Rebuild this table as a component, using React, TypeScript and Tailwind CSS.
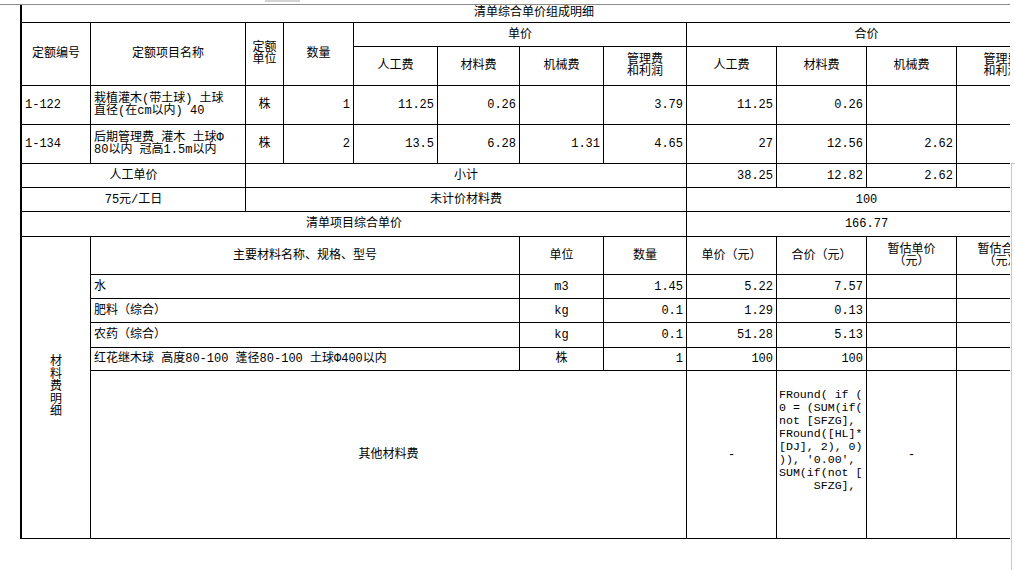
import React from "react";

type CellProps = { c?: string; children?: React.ReactNode };

const Cell = ({ c = "", children }: CellProps) => (
  <div className={`bg-white flex items-center overflow-hidden whitespace-nowrap ${c}`}>{children}</div>
);

const C = "justify-center text-center";
const R = "justify-end pr-[3px]";
const L = "justify-start pl-[3px]";

export default function App() {
  const vert = ["材", "料", "费", "明", "细"];
  return (
    <div className="w-[1015px] h-[570px] bg-white overflow-hidden text-black text-[12px] font-['Liberation_Mono','Noto_Sans_CJK_SC',monospace]">
      <div className="h-[4px] flex">
        <div className="ml-[265px] w-[35px] h-[2px] bg-[#d4d4d4]" />
      </div>
      <div className="w-[1010px] h-px bg-[#8c8c8c]" />
      <div className="flex">
        <div className="w-[20px] shrink-0" />
        <div className="w-[990px] shrink-0 overflow-hidden">
          <div className="grid w-[1026px] gap-px bg-black border-l-2 border-b border-black grid-cols-[68px_154px_37px_69px_83px_81px_83px_82px_89px_89px_89px_89px] grid-rows-[17px_23px_38px_38px_38px_23px_23px_24px_37px_23px_23px_24px_22px_167px] leading-[14px]">
            {/* row 1 */}
            <Cell c={`col-span-12 ${C} items-start pt-[1px]`}>清单综合单价组成明细</Cell>
            {/* rows 2-3 */}
            <Cell c={`row-span-2 ${C}`}>定额编号</Cell>
            <Cell c={`row-span-2 ${C}`}>定额项目名称</Cell>
            <Cell c={`row-span-2 ${C} leading-[12px]`}>定额<br />单位</Cell>
            <Cell c={`row-span-2 ${C}`}>数量</Cell>
            <Cell c={`col-span-4 ${C}`}>单价</Cell>
            <Cell c={`col-span-4 ${C}`}>合价</Cell>
            <Cell c={C}>人工费</Cell>
            <Cell c={C}>材料费</Cell>
            <Cell c={C}>机械费</Cell>
            <Cell c={`${C} leading-[12px]`}>管理费<br />和利润</Cell>
            <Cell c={C}>人工费</Cell>
            <Cell c={C}>材料费</Cell>
            <Cell c={C}>机械费</Cell>
            <Cell c={`${C} leading-[12px]`}>管理费<br />和利润</Cell>
            {/* row 4 */}
            <Cell c={L}>1-122</Cell>
            <Cell c={`${L} leading-[12px]`}>
              <div>栽植灌木(带土球) 土球<br />直径(在cm以内) 40</div>
            </Cell>
            <Cell c={C}>株</Cell>
            <Cell c={R}>1</Cell>
            <Cell c={R}>11.25</Cell>
            <Cell c={R}>0.26</Cell>
            <Cell c={R}></Cell>
            <Cell c={R}>3.79</Cell>
            <Cell c={R}>11.25</Cell>
            <Cell c={R}>0.26</Cell>
            <Cell c={R}></Cell>
            <Cell c={R}></Cell>
            {/* row 5 */}
            <Cell c={L}>1-134</Cell>
            <Cell c={`${L} leading-[12px]`}>
              <div>后期管理费 灌木 土球Φ<br />80以内 冠高1.5m以内</div>
            </Cell>
            <Cell c={C}>株</Cell>
            <Cell c={R}>2</Cell>
            <Cell c={R}>13.5</Cell>
            <Cell c={R}>6.28</Cell>
            <Cell c={R}>1.31</Cell>
            <Cell c={R}>4.65</Cell>
            <Cell c={R}>27</Cell>
            <Cell c={R}>12.56</Cell>
            <Cell c={R}>2.62</Cell>
            <Cell c={R}></Cell>
            {/* row 6 */}
            <Cell c={`col-span-2 ${C}`}>人工单价</Cell>
            <Cell c={`col-span-6 ${C}`}>小计</Cell>
            <Cell c={R}>38.25</Cell>
            <Cell c={R}>12.82</Cell>
            <Cell c={R}>2.62</Cell>
            <Cell c={R}></Cell>
            {/* row 7 */}
            <Cell c={`col-span-2 ${C}`}>75元/工日</Cell>
            <Cell c={`col-span-6 ${C}`}>未计价材料费</Cell>
            <Cell c={`col-span-4 ${C}`}>100</Cell>
            {/* row 8 */}
            <Cell c={`col-span-8 ${C}`}>清单项目综合单价</Cell>
            <Cell c={`col-span-4 ${C}`}>166.77</Cell>
            {/* material section */}
            <Cell c={`row-span-6 ${C}`}>
              <div className="flex flex-col items-center leading-[12.6px]">
                {vert.map((ch, i) => (
                  <span key={i}>{ch}</span>
                ))}
              </div>
            </Cell>
            <Cell c={`col-span-5 ${C}`}>主要材料名称、规格、型号</Cell>
            <Cell c={C}>单位</Cell>
            <Cell c={C}>数量</Cell>
            <Cell c={C}>单价（元）</Cell>
            <Cell c={C}>合价（元）</Cell>
            <Cell c={`${C} leading-[12px]`}>暂估单价<br />（元）</Cell>
            <Cell c={`${C} leading-[12px]`}>暂估合价<br />（元）</Cell>
            {/* 水 */}
            <Cell c={`col-span-5 ${L}`}>水</Cell>
            <Cell c={C}>m3</Cell>
            <Cell c={R}>1.45</Cell>
            <Cell c={R}>5.22</Cell>
            <Cell c={R}>7.57</Cell>
            <Cell c={R}></Cell>
            <Cell c={R}></Cell>
            {/* 肥料 */}
            <Cell c={`col-span-5 ${L}`}>肥料（综合）</Cell>
            <Cell c={C}>kg</Cell>
            <Cell c={R}>0.1</Cell>
            <Cell c={R}>1.29</Cell>
            <Cell c={R}>0.13</Cell>
            <Cell c={R}></Cell>
            <Cell c={R}></Cell>
            {/* 农药 */}
            <Cell c={`col-span-5 ${L}`}>农药（综合）</Cell>
            <Cell c={C}>kg</Cell>
            <Cell c={R}>0.1</Cell>
            <Cell c={R}>51.28</Cell>
            <Cell c={R}>5.13</Cell>
            <Cell c={R}></Cell>
            <Cell c={R}></Cell>
            {/* 红花继木球 */}
            <Cell c={`col-span-5 ${L}`}>红花继木球 高度80-100 蓬径80-100 土球Φ400以内</Cell>
            <Cell c={C}>株</Cell>
            <Cell c={R}>1</Cell>
            <Cell c={R}>100</Cell>
            <Cell c={R}>100</Cell>
            <Cell c={R}></Cell>
            <Cell c={R}></Cell>
            {/* 其他材料费 */}
            <Cell c={`col-span-7 ${C}`}>其他材料费</Cell>
            <Cell c={C}>-</Cell>
            <Cell c="flex-col items-start justify-start pt-[17px] pl-[2px] whitespace-pre text-[11.6px] leading-[13px]">
              <span>FRound( if (</span>
              <span>0 = (SUM(if(</span>
              <span>not [SFZG],</span>
              <span>FRound([HL]*</span>
              <span>[DJ], 2), 0)</span>
              <span>)), '0.00',</span>
              <span>SUM(if(not [</span>
              <span>     SFZG],</span>
            </Cell>
            <Cell c={C}>-</Cell>
            <Cell c={C}></Cell>
          </div>
        </div>
        <div className="flex flex-col shrink-0">
          <div className="h-[158px]" />
          <div className="ml-px w-[4px] h-[407px] border-l border-t border-[#c8c8c8]" />
        </div>
      </div>
    </div>
  );
}
